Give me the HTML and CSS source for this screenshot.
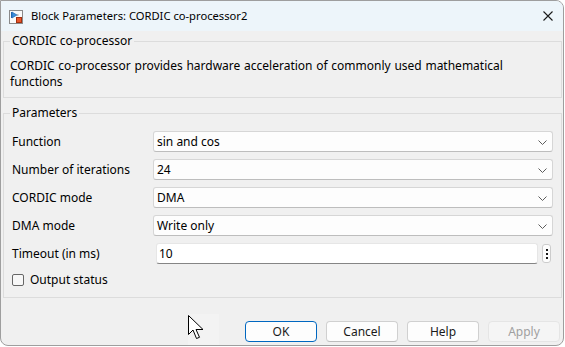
FILE: index.html
```html
<!DOCTYPE html>
<html>
<head>
<meta charset="utf-8">
<link rel="stylesheet" href="styles.css">
</head>
<body>
<div class="window">
  <div class="titlebar">
    <svg class="app-icon" width="14" height="14" viewBox="0 0 14 14">
      <rect x="0.5" y="0.5" width="13" height="13" fill="#fafafa" stroke="#8a8a8a"/>
      <line x1="2.5" y1="2" x2="2.5" y2="8" stroke="#2a6db5"/>
      <polygon points="3,2 8,5 3,8" fill="#3b8fdc" stroke="#1f5fa8" stroke-width="0.6"/>
      <line x1="8" y1="5" x2="9.5" y2="5" stroke="#555" stroke-width="0.8"/>
      <rect x="7.5" y="7.5" width="5" height="5" fill="#e8562a" stroke="#a3300f"/>
    </svg>
    <span class="title">Block Parameters: CORDIC co-processor2</span>
    <svg class="close" width="10" height="10" viewBox="0 0 10 10">
      <path d="M0.5 0.5 L9.5 9.5 M9.5 0.5 L0.5 9.5" stroke="#1a1a1a" stroke-width="1.1"/>
    </svg>
  </div>
  <div class="content">
    <fieldset class="group group-desc">
      <legend>CORDIC co-processor</legend>
      <p class="desc">CORDIC co-processor provides hardware acceleration of commonly used mathematical functions</p>
    </fieldset>
    <fieldset class="group group-params">
      <legend>Parameters</legend>
      <div class="grid">
        <span class="label">Function</span>
        <div class="select"><span>sin and cos</span><svg class="chev" width="9" height="5" viewBox="0 0 9 5"><path d="M0.5 0.5 L4.5 4.5 L8.5 0.5" fill="none" stroke="#5c5c5c"/></svg></div>
        <span class="label">Number of iterations</span>
        <div class="select"><span>24</span><svg class="chev" width="9" height="5" viewBox="0 0 9 5"><path d="M0.5 0.5 L4.5 4.5 L8.5 0.5" fill="none" stroke="#5c5c5c"/></svg></div>
        <span class="label">CORDIC mode</span>
        <div class="select"><span>DMA</span><svg class="chev" width="9" height="5" viewBox="0 0 9 5"><path d="M0.5 0.5 L4.5 4.5 L8.5 0.5" fill="none" stroke="#5c5c5c"/></svg></div>
        <span class="label">DMA mode</span>
        <div class="select"><span>Write only</span><svg class="chev" width="9" height="5" viewBox="0 0 9 5"><path d="M0.5 0.5 L4.5 4.5 L8.5 0.5" fill="none" stroke="#5c5c5c"/></svg></div>
        <span class="label">Timeout (in ms)</span>
        <div class="text-row">
          <div class="input">10</div>
          <div class="more"><i></i><i></i><i></i></div>
        </div>
      </div>
      <div class="check">
        <span class="box"></span>
        <span>Output status</span>
      </div>
    </fieldset>
    <div class="buttons">
      <button class="btn btn-default">OK</button>
      <button class="btn">Cancel</button>
      <button class="btn">Help</button>
      <button class="btn btn-disabled">Apply</button>
    </div>
  </div>
  <div class="cursor-halo"></div>
  <svg class="cursor" width="18" height="26" viewBox="0 0 18 26">
    <polygon points="0.5,0.5 0.5,19.5 5,15 8.5,23.5 11.5,22.3 8,14.5 15,14.5" fill="#fff" stroke="#000" stroke-width="1" stroke-linejoin="round"/>
  </svg>
</div>
</body>
</html>
```
FILE: styles.css
```css
* { box-sizing: border-box; }
html, body { margin: 0; padding: 0; background: #ffffff; }
body {
  font-family: "Noto Sans", "Open Sans", sans-serif;
  font-size: 12px;
  color: #000;
}
.window {
  position: relative;
  width: 564px;
  height: 346px;
  border: 1px solid #9e9e9e;
  border-radius: 0 8px 8px 8px;
  background: #f0f0f0;
  overflow: hidden;
  display: flex;
  flex-direction: column;
}
.titlebar {
  height: 30px;
  flex: none;
  background: #edf5fa;
  display: flex;
  align-items: center;
  padding-left: 8px;
}
.app-icon { flex: none; margin-top: 1px; }
.title {
  font-size: 11.2px;
  margin-left: 8px;
  color: #000;
  flex: 1;
  line-height: 16px;
}
.close { flex: none; margin-right: 10px; margin-top: 0px; }
.content {
  flex: 1;
  padding: 0 1px 0 2px;
  display: flex;
  flex-direction: column;
}
.group {
  margin: 0;
  border: 1px solid #dcdcdc;
  min-width: 0;
}
.group legend {
  padding: 0 2px;
  line-height: 16px;
  font-size: 12px;
  margin-left: 0;
}
.group-desc {
  margin-top: 2px;
  padding: 0 6px 7px 6px;
}
.desc {
  margin: 9px 0 0 0;
  line-height: 16px;
  max-width: 510px;
  word-spacing: 0.6px;
}
.group-params {
  margin-top: 7px;
  padding: 10px 8px 9px 6px;
}
.grid {
  display: grid;
  grid-template-columns: 143px 1fr;
  grid-auto-rows: 21px;
  row-gap: 7px;
  align-items: center;
}
.label { padding-left: 2px; line-height: 16px; }
.select {
  height: 21px;
  background: #fdfdfd;
  border: 1px solid #d6d6d6;
  border-bottom-color: #bdbdbd;
  border-radius: 3px;
  display: flex;
  align-items: center;
  justify-content: space-between;
  padding: 0 5px 0 3px;
  line-height: 16px;
}
.chev { flex: none; margin-top: 1px; }
.text-row {
  height: 21px;
  display: flex;
  align-items: center;
  gap: 4px;
  margin-left: 3px;
  margin-right: 2px;
}
.input {
  flex: 1;
  height: 21px;
  background: #ffffff;
  border: 1px solid #e6e6e6;
  border-bottom-color: #858585;
  border-radius: 3px;
  padding: 0 2px;
  line-height: 19px;
}
.more {
  flex: none;
  width: 9px;
  height: 19px;
  background: #fdfdfd;
  border: 1px solid #cccccc;
  border-radius: 3px;
  display: flex;
  flex-direction: column;
  align-items: center;
  justify-content: center;
  gap: 2px;
}
.more i {
  display: block;
  width: 2px;
  height: 2px;
  background: #1a1a1a;
}
.check {
  margin-top: 8px;
  display: flex;
  align-items: center;
  gap: 6px;
  padding-left: 2px;
  line-height: 16px;
}
.box {
  width: 12px;
  height: 12px;
  border: 1px solid #666666;
  border-radius: 2px;
  background: #f7f7f7;
}
.buttons {
  margin-top: 23px;
  display: flex;
  justify-content: flex-end;
  gap: 9px;
  padding-right: 2px;
}
.btn {
  width: 72px;
  height: 21px;
  font-family: "Noto Sans", "Open Sans", sans-serif;
  font-size: 12px;
  line-height: 16px;
  color: #1a1a1a;
  background: #fdfdfd;
  border: 1px solid #d0d0d0;
  border-bottom-color: #bcbcbc;
  border-radius: 4px;
  padding: 0;
}
.btn-default {
  border: 1px solid #0067c0;
}
.btn-disabled {
  background: #f5f5f5;
  border-color: #e5e5e5;
  color: #a0a0a0;
}
.cursor-halo {
  position: absolute;
  left: 187px;
  top: 313px;
  width: 31px;
  height: 32px;
  background: #f3f3f3;
}
.cursor {
  position: absolute;
  left: 187px;
  top: 314px;
}
```
